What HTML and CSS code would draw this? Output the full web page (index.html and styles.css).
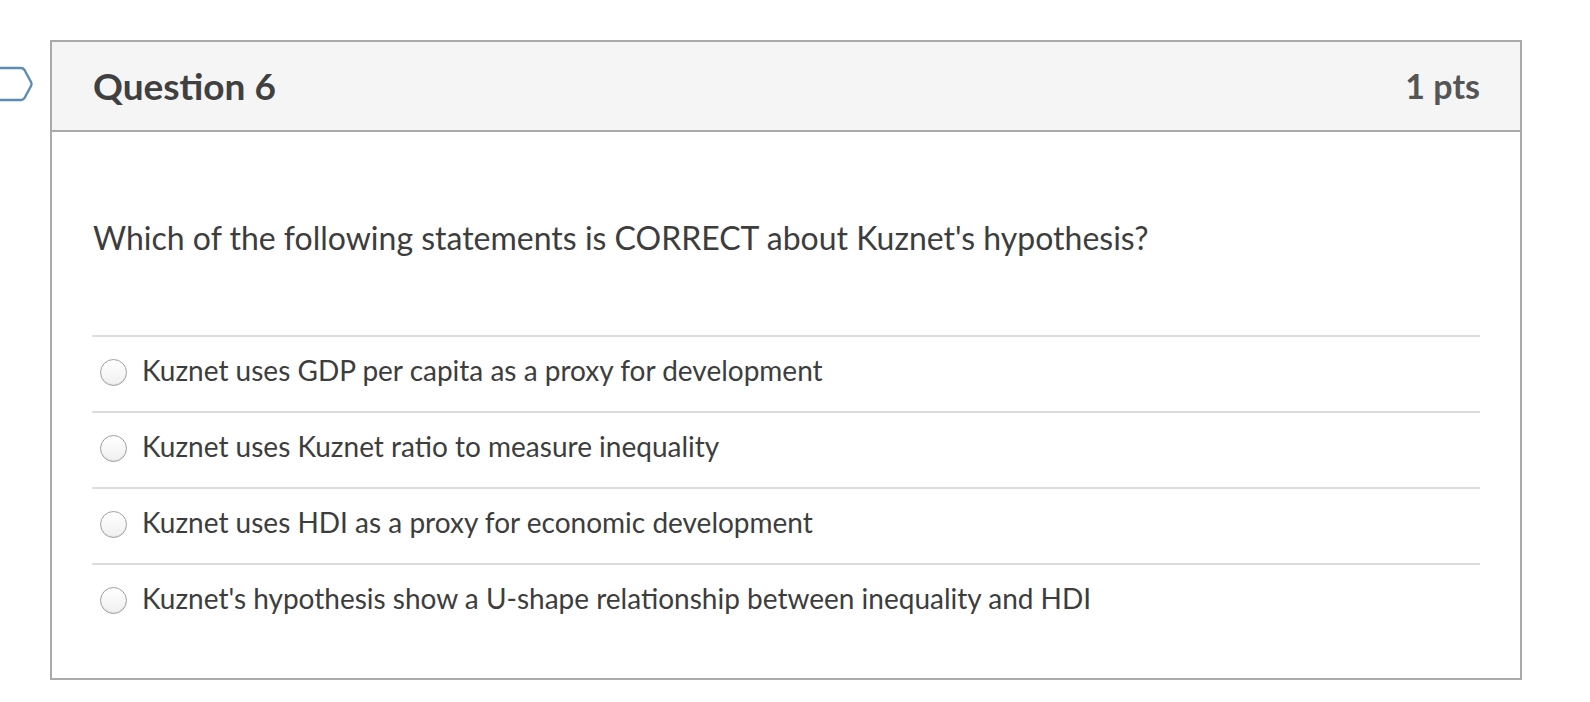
FILE: index.html
```html
<!DOCTYPE html>
<html>
<head>
<meta charset="utf-8">
<link rel="stylesheet" href="styles.css">
</head>
<body>
<div class="page">
  <div class="flag-col">
    <svg class="flag" width="40" height="36" viewBox="0 0 40 36">
      <path d="M-10 2 H21 Q23 2 24.5 4 L31 16 Q32 18 31 20 L24.5 32 Q23 34 21 34 H-10" fill="none" stroke="#5b8cb5" stroke-width="2.4" stroke-linejoin="round"/>
    </svg>
  </div>
  <div class="card">
    <div class="header">
      <h2 class="title">Question 6</h2>
      <div class="pts">1 pts</div>
    </div>
    <div class="body">
      <p class="question">Which of the following statements is CORRECT about Kuznet's hypothesis?</p>
      <div class="answers">
        <div class="answer"><span class="radio"></span><span class="label">Kuznet uses GDP per capita as a proxy for development</span></div>
        <div class="answer"><span class="radio"></span><span class="label">Kuznet uses Kuznet ratio to measure inequality</span></div>
        <div class="answer"><span class="radio"></span><span class="label">Kuznet uses HDI as a proxy for economic development</span></div>
        <div class="answer"><span class="radio"></span><span class="label">Kuznet's hypothesis show a U-shape relationship between inequality and HDI</span></div>
      </div>
    </div>
  </div>
</div>
</body>
</html>
```
FILE: styles.css
```css
html, body {
  margin: 0;
  padding: 0;
  background: #fff;
}
body {
  font-family: Lato, "Open Sans", sans-serif;
  color: #3d3d3d;
}
.page {
  display: flex;
  padding-top: 40px;
}
.flag-col {
  width: 50px;
  flex: none;
}
.flag {
  display: block;
  margin-top: 26px;
}
.card {
  width: 1472px;
  box-sizing: border-box;
  border: 2px solid #aaaaaa;
}
.header {
  height: 88px;
  box-sizing: content-box;
  background: #f5f5f5;
  border-bottom: 2px solid #aaaaaa;
  display: flex;
  align-items: center;
  justify-content: space-between;
  padding: 0 40px 0 40px;
}
.title {
  margin: 0;
  font-size: 37px;
  font-weight: 700;
  line-height: 1.2;
  color: #404040;
  padding-left: 1px;
}
.pts {
  font-size: 34px;
  font-weight: 700;
  line-height: 1.2;
  color: #555555;
}
.body {
  padding: 0 40px 39px 40px;
}
.question {
  margin: 87px 0 78px 0;
  font-size: 32px;
  line-height: 1.2;
  color: #3d3d3d;
  padding-left: 1px;
}
.answer {
  border-top: 2px solid #dddddd;
  height: 74px;
  display: flex;
  align-items: center;
}
.radio {
  width: 25px;
  height: 25px;
  border-radius: 50%;
  border: 1px solid #a0a0a0;
  background: linear-gradient(#ffffff, #f0f0f0);
  box-shadow: inset 0 -1px 1px rgba(0,0,0,0.08);
  margin-left: 8px;
  margin-bottom: 4px;
  flex: none;
}
.label {
  margin-left: 15px;
  font-size: 28px;
  line-height: 1.2;
  color: #3d3d3d;
  padding-bottom: 8px;
}
```
